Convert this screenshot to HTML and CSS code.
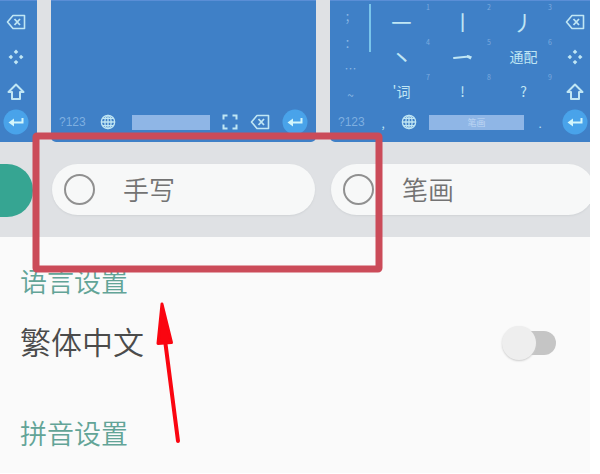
FILE: index.html
```html
<!DOCTYPE html>
<html lang="zh-CN">
<head>
<meta charset="utf-8">
<title>语言设置</title>
<link rel="stylesheet" href="styles.css">
</head>
<body>
<svg class="defs" aria-hidden="true">
  <symbol id="backspace" viewBox="0 0 20 16"><path d="M7 1.500H18.500V14.500H7L1.500 8Z" fill="none" stroke="currentColor" stroke-width="1.600" stroke-linejoin="round"/><path d="M8.500 5L14 11M14 5L8.500 11" stroke="currentColor" stroke-width="1.800"/></symbol>
  <symbol id="move" viewBox="0 0 16 16"><path d="M8 .5L10.300 3 8 5 5.700 3ZM8 15.500L10.300 13 8 11 5.700 13ZM.5 8L3 5.700 5 8 3 10.300ZM15.500 8L13 5.700 11 8 13 10.300Z" fill="currentColor"/></symbol>
  <symbol id="shift" viewBox="0 0 18 18"><path d="M9 1.500L16.500 9H13V16H5V9H1.500Z" fill="none" stroke="currentColor" stroke-width="2" stroke-linejoin="round"/></symbol>
  <symbol id="enter" viewBox="0 0 26 26"><circle cx="13" cy="13" r="12.500" fill="#49a3ea"/><path d="M19.500 9V13.500H8" fill="none" stroke="#d3f6fb" stroke-width="2"/><path d="M5.500 13.500L11 9.500V17.500Z" fill="#d3f6fb"/></symbol>
  <symbol id="globe" viewBox="0 0 18 18"><g fill="none" stroke="currentColor" stroke-width="1.500"><circle cx="9" cy="9" r="7.500"/><ellipse cx="9" cy="9" rx="3.500" ry="7.500"/><path d="M9 1.500V16.500M1.500 9H16.500M3 5H15M3 13H15"/></g></symbol>
  <symbol id="expand" viewBox="0 0 16 16"><path d="M1.500 5.500V1.500H5.500M10.500 1.500H14.500V5.500M14.500 10.500V14.500H10.500M5.500 14.500H1.500V10.500" fill="none" stroke="currentColor" stroke-width="2"/></symbol>
  <symbol id="fold" viewBox="0 0 20 16"><path d="M1 9L16 7.500" stroke="currentColor" stroke-width="2" stroke-linecap="round"/><path d="M14 6L19 7.500 17.500 10.500 14 8.500Z" fill="currentColor"/></symbol>
</svg>

<main class="screen">
  <section class="picker">
    <div class="choice">
      <div class="keyboard keyboard-cut">
        <div class="side">
          <svg class="key-icon"><use href="#backspace"/></svg>
          <svg class="key-icon"><use href="#move"/></svg>
          <svg class="key-icon shift"><use href="#shift"/></svg>
          <svg class="enter"><use href="#enter"/></svg>
        </div>
      </div>
      <input class="pill-selected" type="radio" name="layout" checked>
    </div>

    <div class="choice">
      <div class="keyboard keyboard-blank">
        <div class="bar">
          <span class="mode">?123</span>
          <svg class="key-icon"><use href="#globe"/></svg>
          <span class="space"></span>
          <svg class="key-icon"><use href="#expand"/></svg>
          <svg class="key-icon"><use href="#backspace"/></svg>
          <svg class="enter"><use href="#enter"/></svg>
        </div>
      </div>
      <label class="pill"><input type="radio" name="layout"><span>手写</span></label>
    </div>

    <div class="choice">
      <div class="keyboard keyboard-strokes">
        <div class="marks"><span>；</span><span>：</span><span>…</span><span>~</span></div>
        <div class="keys">
          <span class="key">㇐<sup>1</sup></span><span class="key">㇑<sup>2</sup></span><span class="key">㇓<sup>3</sup></span>
          <span class="key">㇔<sup>4</sup></span><span class="key"><svg class="key-icon"><use href="#fold"/></svg><sup>5</sup></span><span class="key word">通配<sup>6</sup></span>
          <span class="key word">'词<sup>7</sup></span><span class="key word">!<sup>8</sup></span><span class="key word">?<sup>9</sup></span>
        </div>
        <div class="side">
          <svg class="key-icon"><use href="#backspace"/></svg>
          <svg class="key-icon"><use href="#move"/></svg>
          <svg class="key-icon shift"><use href="#shift"/></svg>
          <svg class="enter"><use href="#enter"/></svg>
        </div>
        <div class="bar">
          <span class="mode">?123</span>
          <span class="dot">,</span>
          <svg class="key-icon"><use href="#globe"/></svg>
          <span class="space">笔画</span>
          <span class="dot">.</span>
        </div>
      </div>
      <label class="pill"><input type="radio" name="layout"><span>笔画</span></label>
    </div>
  </section>

  <section class="settings">
    <h2>语言设置</h2>
    <label class="setting"><span>繁体中文</span><input class="switch" type="checkbox" role="switch"></label>
    <h2>拼音设置</h2>
  </section>
</main>

<svg class="annotation" width="600" height="474" viewBox="0 0 600 474" aria-hidden="true">
  <rect x="36" y="136" width="343" height="133" rx="1" fill="none" stroke="#cb4b59" stroke-width="7"/>
  <path d="M165 340L178 441" stroke="#fa0510" stroke-width="4" stroke-linecap="round"/>
  <path d="M162 304L171.500 342.500L158 343.500Z" fill="#fa0510" stroke="#fa0510" stroke-width="3" stroke-linejoin="round"/>
</svg>
</body>
</html>
```

FILE: styles.css
```css
* { box-sizing: border-box; }

body {
  margin: 0;
  position: relative;
  overflow: hidden;
  background: #fff;
  font-family: "Noto Sans CJK SC", sans-serif;
  font-weight: 350;
}

.defs { display: none; }

.screen {
  margin-right: 10px;
  background: #fafafa;
  overflow: hidden;
}

.picker {
  display: grid;
  grid-template-columns: 37px 265px minmax(0, 1fr);
  gap: 14px;
  padding-bottom: 20px;
  background: #dfe1e4;
}

.choice {
  display: flex;
  flex-direction: column;
  gap: 22px;
}

/* Keyboard previews */
.keyboard {
  height: 142px;
  background: #3f80c7;
  border-top: 1px solid #5a8ed6;
  color: #c0e6f4;
}

.keyboard-cut { padding: 3px 5px 0 0; }

.keyboard-blank {
  display: flex;
  align-items: flex-end;
  border-radius: 0 0 5px 5px;
}

.keyboard-strokes {
  display: grid;
  grid-template-columns: 41px 183px minmax(0, 1fr);
  grid-template-rows: 105px 33px;
  padding-top: 3px;
  border-radius: 0 0 0 5px;
}

.key-icon { width: 20px; height: 16px; flex: none; }
.shift { height: 18px; }
.enter { width: 26px; height: 26px; flex: none; }

.side {
  display: grid;
  grid-template-rows: 35px 35px 35px 26px;
  place-items: center;
}

.keyboard-strokes .side {
  grid-row: 1 / 3;
  grid-column: 3;
  padding-left: 6px;
  align-content: start;
}

.marks {
  display: grid;
  grid-template-rows: repeat(4, 26px);
  place-items: center;
  font-size: 12px;
  line-height: 26px;
  color: #8cb9e4;
  background: linear-gradient(#79c4ea, #79c4ea) right top / 2px 48px no-repeat;
}

.keys {
  display: grid;
  grid-template-columns: repeat(3, 61px);
  grid-template-rows: repeat(3, 35px);
}

.key {
  position: relative;
  display: grid;
  place-items: center;
  font-size: 22px;
  font-weight: 400;
  line-height: 35px;
}

.word { font-size: 14px; }

.key sup {
  position: absolute;
  top: 0;
  right: 2px;
  font-size: 7px;
  line-height: 7px;
  color: #7cabdf;
}

.bar {
  display: flex;
  align-items: center;
  width: 100%;
  height: 33px;
  padding: 0 8px 7px;
}

.keyboard-blank .bar { gap: 10px; }
.keyboard-blank .enter { margin-left: 2px; }
.keyboard-blank .space { margin-left: 4px; }

.keyboard-strokes .bar {
  grid-column: 1 / 3;
  grid-row: 2;
  gap: 10px;
}

.mode {
  width: 29px;
  font-family: "Liberation Sans", sans-serif;
  font-size: 12px;
  color: #7eafe0;
}

.dot { width: 12px; font-size: 12px; text-align: center; }

.space {
  flex: 1;
  height: 15px;
  background: #8fb6e6;
  color: #c0d8f4;
  font-size: 9px;
  line-height: 15px;
  text-align: center;
}

/* Layout choices */
.pill {
  display: flex;
  align-items: center;
  gap: 28px;
  height: 51px;
  margin: 0 1px;
  padding-left: 12px;
  border-radius: 26px;
  background: #f7f8f8;
  box-shadow: 0 1px 2px #d0d3d6;
  color: #737373;
  font-size: 26px;
  line-height: 36px;
}

.pill span { padding-bottom: 2px; }

.keyboard-strokes + .pill { margin-right: -4px; }

.pill input {
  appearance: none;
  width: 31px;
  height: 31px;
  margin: 0;
  border: 2px solid #909090;
  border-radius: 50%;
}

.pill-selected {
  appearance: none;
  width: 33px;
  height: 53px;
  margin: 0;
  border-radius: 0 26px 26px 0;
  background: #36a592;
}

/* Settings list */
.settings { padding: 24px 34px 20px 20px; }

h2 {
  margin: 0;
  color: #62a497;
  font-size: 27px;
  font-weight: 350;
  line-height: 40px;
}

.setting {
  display: flex;
  align-items: center;
  justify-content: space-between;
  height: 112px;
  padding-bottom: 28px;
  color: #4b4b4b;
  font-size: 31px;
  line-height: 44px;
}

.setting span { padding-bottom: 4px; }

.switch {
  appearance: none;
  display: flex;
  align-items: center;
  width: 54px;
  height: 24px;
  margin: 0;
  background: linear-gradient(#c5c5c5, #c5c5c5) right / 34px 24px no-repeat;
  border-radius: 12px;
}

.switch::before {
  content: "";
  flex: none;
  width: 34px;
  height: 34px;
  border-radius: 50%;
  background: #eee;
  box-shadow: 0 1px 2px #ccc;
}

.annotation {
  position: absolute;
  top: 0;
  left: 0;
  pointer-events: none;
}
```
